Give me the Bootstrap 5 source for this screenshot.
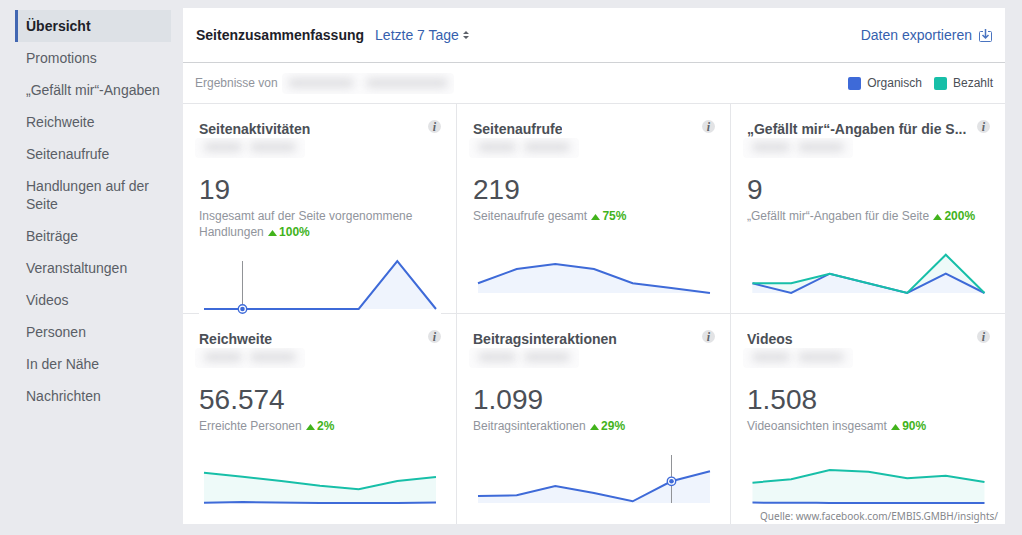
<!DOCTYPE html>
<html lang="de">
<head>
<meta charset="utf-8">
<meta name="viewport" content="width=device-width, initial-scale=1">
<title>Seitenzusammenfassung</title>
<link href="https://cdn.jsdelivr.net/npm/bootstrap@5.3.0/dist/css/bootstrap.min.css" rel="stylesheet">
<style>
  body { background: #e9eaee; font-family: "Liberation Sans", Arial, sans-serif; font-size: 14px; line-height: 18px; color: #4b4f56; }
  .page { padding: 8px 17px 11px 15px; gap: 12px; }
  .side-nav { width: 156px; padding-top: 2px; }
  .side-nav .nav-link { padding: 7px 8px 7px 11px; color: #5a5e66; }
  .side-nav .nav-link.active { background: #dde1e6; border-left: 3px solid #4267b2; padding-left: 8px; color: #1d2129; font-weight: bold; }
  .panel { background: #fff; min-width: 0; }
  .panel-top { padding: 0 13px; height: 55px; border-bottom: 1px solid #d0d2d5; }
  .panel-top h1 { font-size: 14px; line-height: 18px; font-weight: bold; color: #1d2129; margin: 0 11px 0 0; }
  .blue-link { color: #365fae; text-decoration: none; background: none; border: 0; padding: 0; }
  .export { gap: 7px; }
  .panel-sub { padding: 0 12px; height: 41px; border-bottom: 1px solid #e5e6e9; font-size: 12px; line-height: 16px; }
  .soft { color: #90949c; }
  .legend { gap: 12px; }
  .legend-item { gap: 6px; }
  .swatch { width: 13px; height: 13px; border-radius: 2px; }
  .organic { background: #3e6ad8; }
  .paid { background: #17bfa8; }
  .metric { min-height: 210px; padding: 16px 15px 0 16px; }
  .edge-r { border-right: 1px solid #e5e6e9; }
  .edge-b { border-bottom: 1px solid #e5e6e9; }
  .metric h2 { font-size: 14px; line-height: 18px; font-weight: bold; }
  .info { width: 13px; height: 13px; border: 0; border-radius: 50%; padding: 0; background: #e2e3e5; color: #5f636a; font: italic bold 12px/12px "Liberation Serif", serif; }
  .redacted, .redacted-wide { border-radius: 4px; background: #fbfbfc; overflow: hidden; }
  .redacted { width: 110px; height: 20px; margin-left: -4px; padding: 4px 9px; gap: 8px; }
  .redacted-wide { width: 172px; height: 21px; padding: 5px 6px; gap: 8px; }
  .smudge { height: 10px; border-radius: 5px; background: #e0e0e3; filter: blur(4px); }
  .figure-big { font-size: 28px; line-height: 34px; margin: 15px 0 1px; }
  .caption { font-size: 12px; line-height: 16px; color: #90949c; }
  .caption strong { color: #42b31c; white-space: nowrap; }
  .caption strong svg { margin: 0 2px 0 1px; }
  .chart { display: block; position: relative; width: 100%; height: 58px; margin: 16px 0 -1px; background: #fff; fill: none; stroke-width: 2; }
  .source { right: 7px; bottom: 0; font-family: "Noto Sans", sans-serif; font-size: 10px; line-height: 16px; color: #85878c; }
</style>
</head>
<body>
<svg class="d-none">
  <symbol id="up" viewBox="0 0 9 6"><path d="M4.5 0 9 6H0z" fill="#42b31c"/></symbol>
</svg>
<div class="page d-flex">
  <nav class="side-nav nav flex-column flex-nowrap flex-shrink-0" aria-label="Statistiken">
    <a class="nav-link active" aria-current="page" href="#">Übersicht</a>
    <a class="nav-link" href="#">Promotions</a>
    <a class="nav-link text-nowrap" href="#">„Gefällt mir“-Angaben</a>
    <a class="nav-link" href="#">Reichweite</a>
    <a class="nav-link" href="#">Seitenaufrufe</a>
    <a class="nav-link" href="#">Handlungen auf der Seite</a>
    <a class="nav-link" href="#">Beiträge</a>
    <a class="nav-link" href="#">Veranstaltungen</a>
    <a class="nav-link" href="#">Videos</a>
    <a class="nav-link" href="#">Personen</a>
    <a class="nav-link" href="#">In der Nähe</a>
    <a class="nav-link" href="#">Nachrichten</a>
  </nav>

  <main class="panel flex-grow-1 position-relative">
    <header class="panel-top d-flex align-items-center">
      <h1>Seitenzusammenfassung</h1>
      <button type="button" class="blue-link d-flex align-items-center gap-1">Letzte 7 Tage
        <svg width="6" height="8" viewBox="0 0 6 8"><path d="M3 0 6 3H0zM3 8 0 5h6z" fill="#5d6169"/></svg></button>
      <a class="blue-link export ms-auto d-flex align-items-center" href="#">Daten exportieren
        <svg width="13" height="13" viewBox="0 0 13 13" fill="none" stroke="#4a74c0"><path d="M4 2.5H1.500a1 1 0 0 0-1 1v8a1 1 0 0 0 1 1h10a1 1 0 0 0 1-1v-8a1 1 0 0 0-1-1H9"/><path d="M6.500 0v9M3.500 6l3 3 3-3" stroke-width="1.500"/></svg></a>
    </header>
    <div class="panel-sub d-flex align-items-center">
      <span class="soft">Ergebnisse von</span>
      <span class="redacted-wide d-flex ms-1"><i class="smudge col-5"></i><i class="smudge flex-grow-1 ms-1"></i></span>
      <div class="legend d-flex ms-auto">
        <span class="legend-item d-flex align-items-center"><i class="swatch organic"></i>Organisch</span>
        <span class="legend-item d-flex align-items-center"><i class="swatch paid"></i>Bezahlt</span>
      </div>
    </div>

    <div class="row g-0">
      <section class="col-4 metric edge-r edge-b">
        <div class="d-flex justify-content-between"><h2 class="mb-0 text-truncate">Seitenaktivitäten</h2><button type="button" class="info flex-shrink-0" aria-label="Info">i</button></div>
        <div class="redacted d-flex"><i class="smudge col-5"></i><i class="smudge flex-grow-1"></i></div>
        <div class="figure-big">19</div>
        <div class="caption">Insgesamt auf der Seite vorgenommene Handlungen <strong><svg width="9" height="6"><use href="#up"/></svg>100%</strong></div>
        <svg class="chart" viewBox="0 0 242 58">
          <path d="M159.7 53 198.3 5 237 53z" fill="#eff4fd"/>
          <path d="M43.5 5v48" stroke="#909296" stroke-width="1"/>
          <path d="M5 53H159.7L198.3 5 237 53" stroke="#3e6ad8"/>
          <circle cx="43.5" cy="53" r="4.2" fill="#fff" stroke="#3e6ad8" stroke-width="1.4"/><circle cx="43.5" cy="53" r="2.3" fill="#3e6ad8"/>
        </svg>
      </section>
      <section class="col-4 metric edge-r edge-b">
        <div class="d-flex justify-content-between"><h2 class="mb-0 text-truncate">Seitenaufrufe</h2><button type="button" class="info flex-shrink-0" aria-label="Info">i</button></div>
        <div class="redacted d-flex"><i class="smudge col-5"></i><i class="smudge flex-grow-1"></i></div>
        <div class="figure-big">219</div>
        <div class="caption">Seitenaufrufe gesamt <strong><svg width="9" height="6"><use href="#up"/></svg>75%</strong></div>
        <svg class="chart" viewBox="0 0 242 58">
          <path d="M5 43.3 43.7 29 82.3 24 121 29 159.7 43.3 198.3 48 237 53H5z" fill="#eff4fd"/>
          <path d="M5 43.3 43.7 29 82.3 24 121 29 159.7 43.3 198.3 48 237 53" stroke="#3e6ad8"/>
        </svg>
      </section>
      <section class="col-4 metric edge-b">
        <div class="d-flex justify-content-between"><h2 class="mb-0 text-truncate">„Gefällt mir“-Angaben für die S...</h2><button type="button" class="info flex-shrink-0" aria-label="Info">i</button></div>
        <div class="redacted d-flex"><i class="smudge col-5"></i><i class="smudge flex-grow-1"></i></div>
        <div class="figure-big">9</div>
        <div class="caption">„Gefällt mir“-Angaben für die Seite <strong><svg width="9" height="6"><use href="#up"/></svg>200%</strong></div>
        <svg class="chart" viewBox="0 0 242 58">
          <path d="M5 43.3H43.7L82.3 33.7 159.7 53 198.3 14.7 237 53H5z" fill="#eefaf9"/>
          <path d="M5 43.3 43.7 53 82.3 33.7 159.7 53 198.3 33.7 237 53H5z" fill="#eff4fd"/>
          <path d="M5 43.3 43.7 53 82.3 33.7 159.7 53 198.3 33.7 237 53" stroke="#3e6ad8"/>
          <path d="M5 43.3H43.7L82.3 33.7 159.7 53 198.3 14.7 237 53" stroke="#17bfa8"/>
        </svg>
      </section>
      <section class="col-4 metric edge-r">
        <div class="d-flex justify-content-between"><h2 class="mb-0 text-truncate">Reichweite</h2><button type="button" class="info flex-shrink-0" aria-label="Info">i</button></div>
        <div class="redacted d-flex"><i class="smudge col-5"></i><i class="smudge flex-grow-1"></i></div>
        <div class="figure-big">56.574</div>
        <div class="caption">Erreichte Personen <strong><svg width="9" height="6"><use href="#up"/></svg>2%</strong></div>
        <svg class="chart" viewBox="0 0 242 58">
          <path d="M5 22.7 43.7 26.7 82.3 31 121 35.7 159.7 39.3 198.3 31 237 27V53H5z" fill="#eefaf9"/>
          <path d="M5 22.7 43.7 26.7 82.3 31 121 35.7 159.7 39.3 198.3 31 237 27" stroke="#17bfa8"/>
          <path d="M5 52.8 43.7 52 121 53H198.3L237 52.4" stroke="#3e6ad8"/>
        </svg>
      </section>
      <section class="col-4 metric edge-r">
        <div class="d-flex justify-content-between"><h2 class="mb-0 text-truncate">Beitragsinteraktionen</h2><button type="button" class="info flex-shrink-0" aria-label="Info">i</button></div>
        <div class="redacted d-flex"><i class="smudge col-5"></i><i class="smudge flex-grow-1"></i></div>
        <div class="figure-big">1.099</div>
        <div class="caption">Beitragsinteraktionen <strong><svg width="9" height="6"><use href="#up"/></svg>29%</strong></div>
        <svg class="chart" viewBox="0 0 242 58">
          <path d="M5 46 43.7 45.3 82.3 36 121 43 159.7 51.3 198.3 31.3 237 21.3V53H5z" fill="#eff4fd"/>
          <path d="M198.5 5v48" stroke="#909296" stroke-width="1"/>
          <path d="M5 46 43.7 45.3 82.3 36 121 43 159.7 51.3 198.3 31.3 237 21.3" stroke="#3e6ad8"/>
          <circle cx="198.5" cy="31.3" r="4.2" fill="#fff" stroke="#3e6ad8" stroke-width="1.4"/><circle cx="198.5" cy="31.3" r="2.3" fill="#3e6ad8"/>
        </svg>
      </section>
      <section class="col-4 metric">
        <div class="d-flex justify-content-between"><h2 class="mb-0 text-truncate">Videos</h2><button type="button" class="info flex-shrink-0" aria-label="Info">i</button></div>
        <div class="redacted d-flex"><i class="smudge col-5"></i><i class="smudge flex-grow-1"></i></div>
        <div class="figure-big">1.508</div>
        <div class="caption">Videoansichten insgesamt <strong><svg width="9" height="6"><use href="#up"/></svg>90%</strong></div>
        <svg class="chart" viewBox="0 0 242 58">
          <path d="M5 32.7 43.7 29.3 82.3 20 121 21.7 159.7 28.3 198.3 25.7 237 32V53H5z" fill="#eefaf9"/>
          <path d="M5 32.7 43.7 29.3 82.3 20 121 21.7 159.7 28.3 198.3 25.7 237 32" stroke="#17bfa8"/>
          <path d="M5 52.6 69 52.8 82 53H237" stroke="#3e6ad8"/>
        </svg>
      </section>
    </div>
    <div class="source position-absolute">Quelle: www.facebook.com/EMBIS.GMBH/insights/</div>
  </main>
</div>
<script src="https://cdn.jsdelivr.net/npm/bootstrap@5.3.0/dist/js/bootstrap.bundle.min.js"></script>
</body>
</html>
